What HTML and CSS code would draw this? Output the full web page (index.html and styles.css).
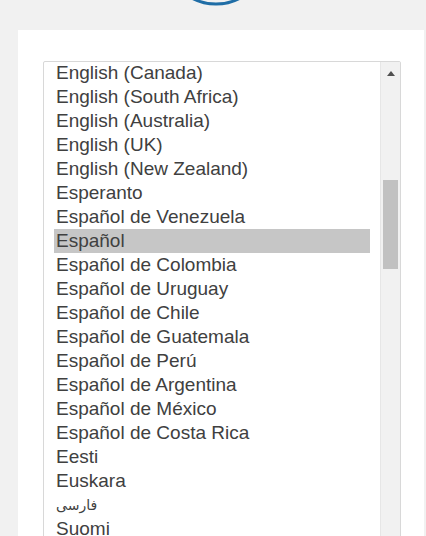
FILE: index.html
```html
<!DOCTYPE html>
<html lang="en">
<head>
<meta charset="utf-8">
<title>Language</title>
<link rel="stylesheet" href="styles.css">
</head>
<body>
<header class="top">
  <svg class="logo" width="120" height="30" viewBox="0 0 120 30">
    <circle cx="60" cy="-47" r="51" fill="none" stroke="#1f6da6" stroke-width="3"/>
  </svg>
</header>
<main class="card">
  <div class="select">
    <ul class="options">
      <li>English (Canada)</li>
      <li>English (South Africa)</li>
      <li>English (Australia)</li>
      <li>English (UK)</li>
      <li>English (New Zealand)</li>
      <li>Esperanto</li>
      <li>Español de Venezuela</li>
      <li class="selected">Español</li>
      <li>Español de Colombia</li>
      <li>Español de Uruguay</li>
      <li>Español de Chile</li>
      <li>Español de Guatemala</li>
      <li>Español de Perú</li>
      <li>Español de Argentina</li>
      <li>Español de México</li>
      <li>Español de Costa Rica</li>
      <li>Eesti</li>
      <li>Euskara</li>
      <li class="rtl" lang="fa">فارسی</li>
      <li>Suomi</li>
    </ul>
    <div class="scrollbar">
      <div class="arrow"></div>
      <div class="thumb"></div>
    </div>
  </div>
</main>
</body>
</html>
```
FILE: styles.css
```css
html, body {
  margin: 0;
  padding: 0;
}
body {
  background: #f1f1f1;
  font-family: "Liberation Sans", Arial, sans-serif;
  height: 536px;
  overflow: hidden;
}
.top {
  height: 30px;
  display: flex;
  justify-content: center;
  overflow: hidden;
}
.logo {
  display: block;
  margin-left: 6px;
}
.card {
  background: #ffffff;
  margin: 0 2px 0 18px;
  padding: 31px 0 0 25px;
  height: 600px;
  box-sizing: border-box;
}
.select {
  width: 358px;
  height: 520px;
  border: 1px solid #d8d8d8;
  border-radius: 2px;
  box-sizing: border-box;
  display: flex;
  overflow: hidden;
}
.options {
  list-style: none;
  margin: 0;
  padding: 0 10px 0 10px;
  flex: 1;
  margin-top: -1px;
}
.options li {
  height: 24px;
  line-height: 24px;
  font-size: 19px;
  color: #404040;
  padding-left: 2px;
  white-space: nowrap;
}
.options li.selected {
  background: #c6c6c6;
}
.options li.rtl {
  font-family: "DejaVu Sans", sans-serif;
  font-size: 14px;
  direction: ltr;
}
.scrollbar {
  width: 20px;
  background: #f1f1f1;
  border-left: 1px solid #e6e6e6;
  box-sizing: border-box;
  display: flex;
  flex-direction: column;
  align-items: center;
}
.arrow {
  width: 0;
  height: 0;
  border-left: 4px solid transparent;
  border-right: 4px solid transparent;
  border-bottom: 5px solid #505050;
  margin-top: 9px;
}
.thumb {
  width: 15px;
  height: 89px;
  background: #c1c1c1;
  margin-top: 104px;
}
```
